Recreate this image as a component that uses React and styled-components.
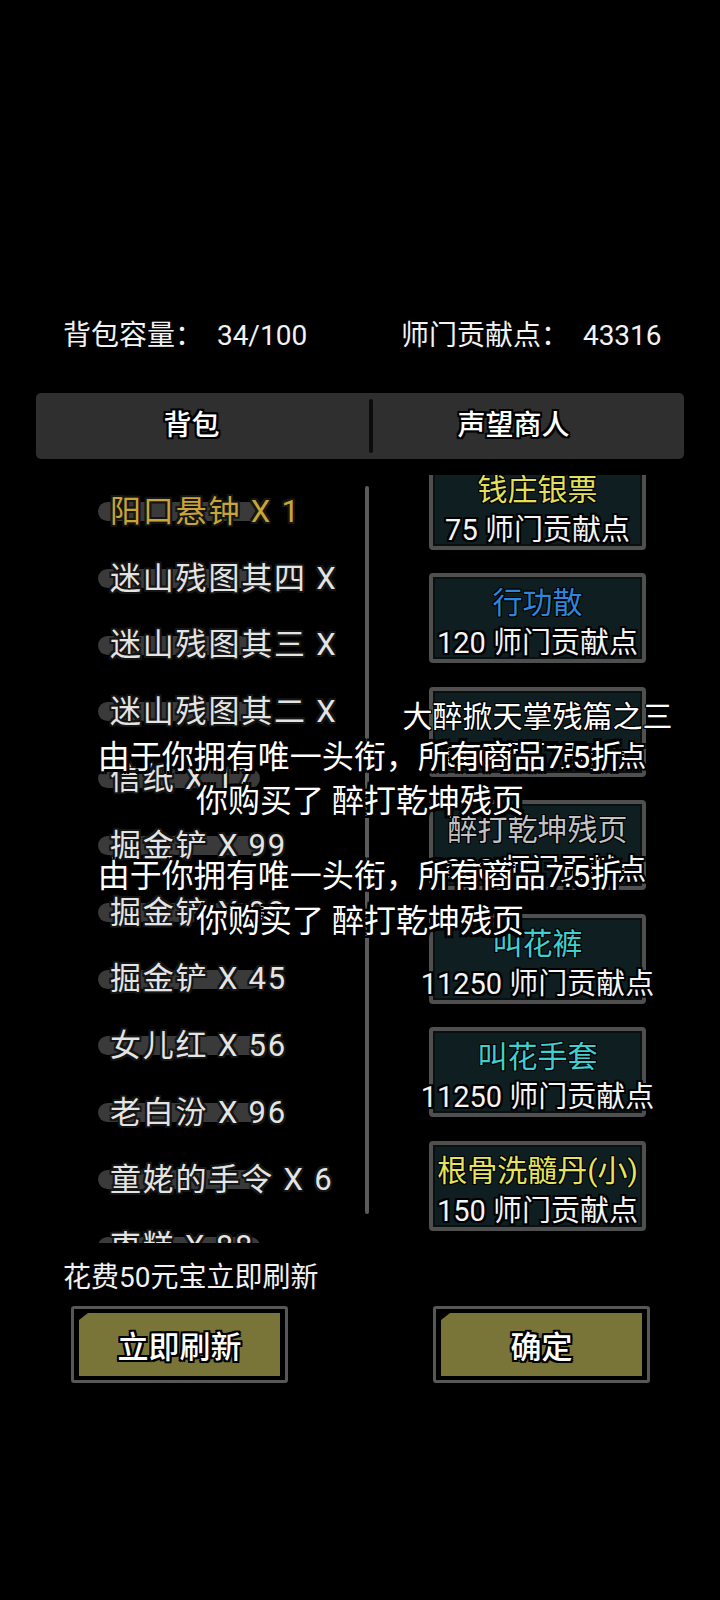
import React from "react";
import styled, { createGlobalStyle } from "styled-components";

const outline = (c, w) =>
  `${w}px 0 ${c}, -${w}px 0 ${c}, 0 ${w}px ${c}, 0 -${w}px ${c}, ${w}px ${w}px ${c}, -${w}px ${w}px ${c}, ${w}px -${w}px ${c}, -${w}px -${w}px ${c}`;

const GlobalStyle = createGlobalStyle`
  html, body {
    margin: 0;
    padding: 0;
    background: #000;
  }
  body {
    font-family: Roboto, "Noto Sans CJK SC", sans-serif;
    color: #fff;
  }
`;

const Page = styled.div`
  position: relative;
  width: 720px;
  height: 1600px;
  padding-top: 316px;
  box-sizing: border-box;
  background: #000;
  overflow: hidden;
`;

const Header = styled.div`
  display: flex;
  padding-left: 63px;
  height: 40px;
  align-items: center;
`;

const Stat = styled.div`
  width: ${(p) => p.$w || "auto"};
  font-size: 28px;
  line-height: 40px;
  color: #f2f2f2;
  white-space: pre;
`;

const Tabs = styled.div`
  display: flex;
  margin: 37px 36px 0;
  height: 66px;
  background: #2f2f2f;
  border-radius: 5px;
  align-items: center;
`;

const Tab = styled.div`
  flex: 0 0 ${(p) => p.$w}px;
  box-sizing: border-box;
  padding-right: ${(p) => p.$pr}px;
  text-align: center;
  font-size: 28px;
  font-weight: 500;
  line-height: 66px;
  color: #fff;
  text-shadow: ${outline("#000", 2)};
`;

const Divider = styled.div`
  width: 4px;
  height: 54px;
  background: #0c0c0c;
  border-radius: 2px;
`;

const Content = styled.div`
  display: flex;
  margin-top: 16px;
  height: 768px;
  padding-left: 98px;
`;

const ItemList = styled.div`
  width: 238px;
  height: 768px;
  overflow: hidden;
`;

const Item = styled.div`
  position: relative;
  height: 66.8px;
  display: flex;
  align-items: center;
  padding-left: 12px;
  white-space: nowrap;
  font-size: 31px;
  letter-spacing: 1.8px;
  color: ${(p) => (p.$gold ? "#c9a535" : "#e4e4e4")};
  text-shadow: ${outline("#151515", 2)};

  &::before {
    content: "";
    position: absolute;
    left: 0;
    top: 27px;
    width: 162px;
    height: 19px;
    border-radius: 10px;
    background: #3a3a3a;
  }

  span {
    position: relative;
  }
`;

const Scrollbar = styled.div`
  margin: 11px 0 0 29px;
  width: 4px;
  height: 728px;
  border-radius: 2px;
  background: #5b5b5b;
`;

const Shop = styled.div`
  margin-left: 20px;
  width: 297px;
  height: 768px;
  overflow: hidden;
`;

const ShopStack = styled.div`
  display: flex;
  flex-direction: column;
  align-items: center;
  gap: 23.5px;
  margin-top: -15.5px;
`;

const Card = styled.div`
  width: 217px;
  height: 90px;
  box-sizing: border-box;
  border: 4px solid #4f4f4f;
  border-radius: 4px;
  background: #0f1e20;
  box-shadow: inset 0 0 0 2px #0a0f10;
  padding-top: 6px;
  display: flex;
  flex-direction: column;
  align-items: center;
  white-space: nowrap;
`;

const CardName = styled.div`
  font-size: 30px;
  line-height: 40px;
  color: ${(p) => p.$color};
  text-shadow: ${outline("#000", 1)};
`;

const CardPrice = styled.div`
  font-size: 29px;
  line-height: 40px;
  color: #f4f4f4;
  text-shadow: ${outline("#000", 2)};
`;

const Toast = styled.div`
  position: absolute;
  left: 0;
  right: 0;
  top: ${(p) => p.$top}px;
  text-align: center;
  font-size: 32px;
  line-height: 44px;
  color: #fff;
  white-space: pre;
  text-shadow: ${outline("#000", 3)};
`;

const Footer = styled.div`
  margin-top: 17px;
  padding-left: 63px;
  font-size: 28px;
  line-height: 36px;
  color: #f2f2f2;
`;

const ButtonRow = styled.div`
  display: flex;
  margin-top: 10px;
  padding-left: 71px;
  gap: 145px;
`;

const Button = styled.div`
  width: 217px;
  height: 77px;
  box-sizing: border-box;
  border: 3px solid #575757;
  border-radius: 3px;
  background: #000;
  padding: 4px 5px;
`;

const ButtonFace = styled.div`
  height: 100%;
  background: #797538;
  clip-path: polygon(9px 0, 100% 0, 100% 100%, 0 100%, 0 7px);
  display: flex;
  align-items: center;
  justify-content: center;
  font-size: 31px;
  font-weight: 500;
  color: #fff;
  text-shadow: ${outline("#000", 2)};
`;

const items = [
  { name: "阳口悬钟 X 1", gold: true },
  { name: "迷山残图其四 X 1" },
  { name: "迷山残图其三 X 1" },
  { name: "迷山残图其二 X 1" },
  { name: "信纸 X 17" },
  { name: "掘金铲 X 99" },
  { name: "掘金铲 X 99" },
  { name: "掘金铲 X 45" },
  { name: "女儿红 X 56" },
  { name: "老白汾 X 96" },
  { name: "童姥的手令 X 6" },
  { name: "枣糕 X 88" },
];

const goods = [
  { name: "钱庄银票", color: "#e3e05a", price: "75 师门贡献点" },
  { name: "行功散", color: "#2c86dc", price: "120 师门贡献点" },
  { name: "大醉掀天掌残篇之三", color: "#ffffff", price: "3000 师门贡献点" },
  { name: "醉打乾坤残页", color: "#c2c2c2", price: "3000 师门贡献点" },
  { name: "叫花裤", color: "#3fcfd0", price: "11250 师门贡献点" },
  { name: "叫花手套", color: "#3fcfd0", price: "11250 师门贡献点" },
  { name: "根骨洗髓丹(小)", color: "#e6e45c", price: "150 师门贡献点" },
];

export default function App() {
  return (
    <>
      <GlobalStyle />
      <Page>
        <Header>
          <Stat $w="338px">背包容量：  34/100</Stat>
          <Stat>师门贡献点：  43316</Stat>
        </Header>

        <Tabs>
          <Tab $w={333} $pr={22}>背包</Tab>
          <Divider />
          <Tab $w={311} $pr={30}>声望商人</Tab>
        </Tabs>

        <Content>
          <ItemList>
            {items.map((it, i) => (
              <Item key={i} $gold={it.gold}>
                <span>{it.name}</span>
              </Item>
            ))}
          </ItemList>
          <Scrollbar />
          <Shop>
            <ShopStack>
              {goods.map((g, i) => (
                <Card key={i}>
                  <CardName $color={g.color}>{g.name}</CardName>
                  <CardPrice>{g.price}</CardPrice>
                </Card>
              ))}
            </ShopStack>
          </Shop>
        </Content>

        <Footer>花费50元宝立即刷新</Footer>
        <ButtonRow>
          <Button>
            <ButtonFace>立即刷新</ButtonFace>
          </Button>
          <Button>
            <ButtonFace>确定</ButtonFace>
          </Button>
        </ButtonRow>

        <Toast $top={735}>由于你拥有唯一头衔，所有商品7.5折</Toast>
        <Toast $top={779}>你购买了 醉打乾坤残页</Toast>
        <Toast $top={854}>由于你拥有唯一头衔，所有商品7.5折</Toast>
        <Toast $top={899}>你购买了 醉打乾坤残页</Toast>
      </Page>
    </>
  );
}
